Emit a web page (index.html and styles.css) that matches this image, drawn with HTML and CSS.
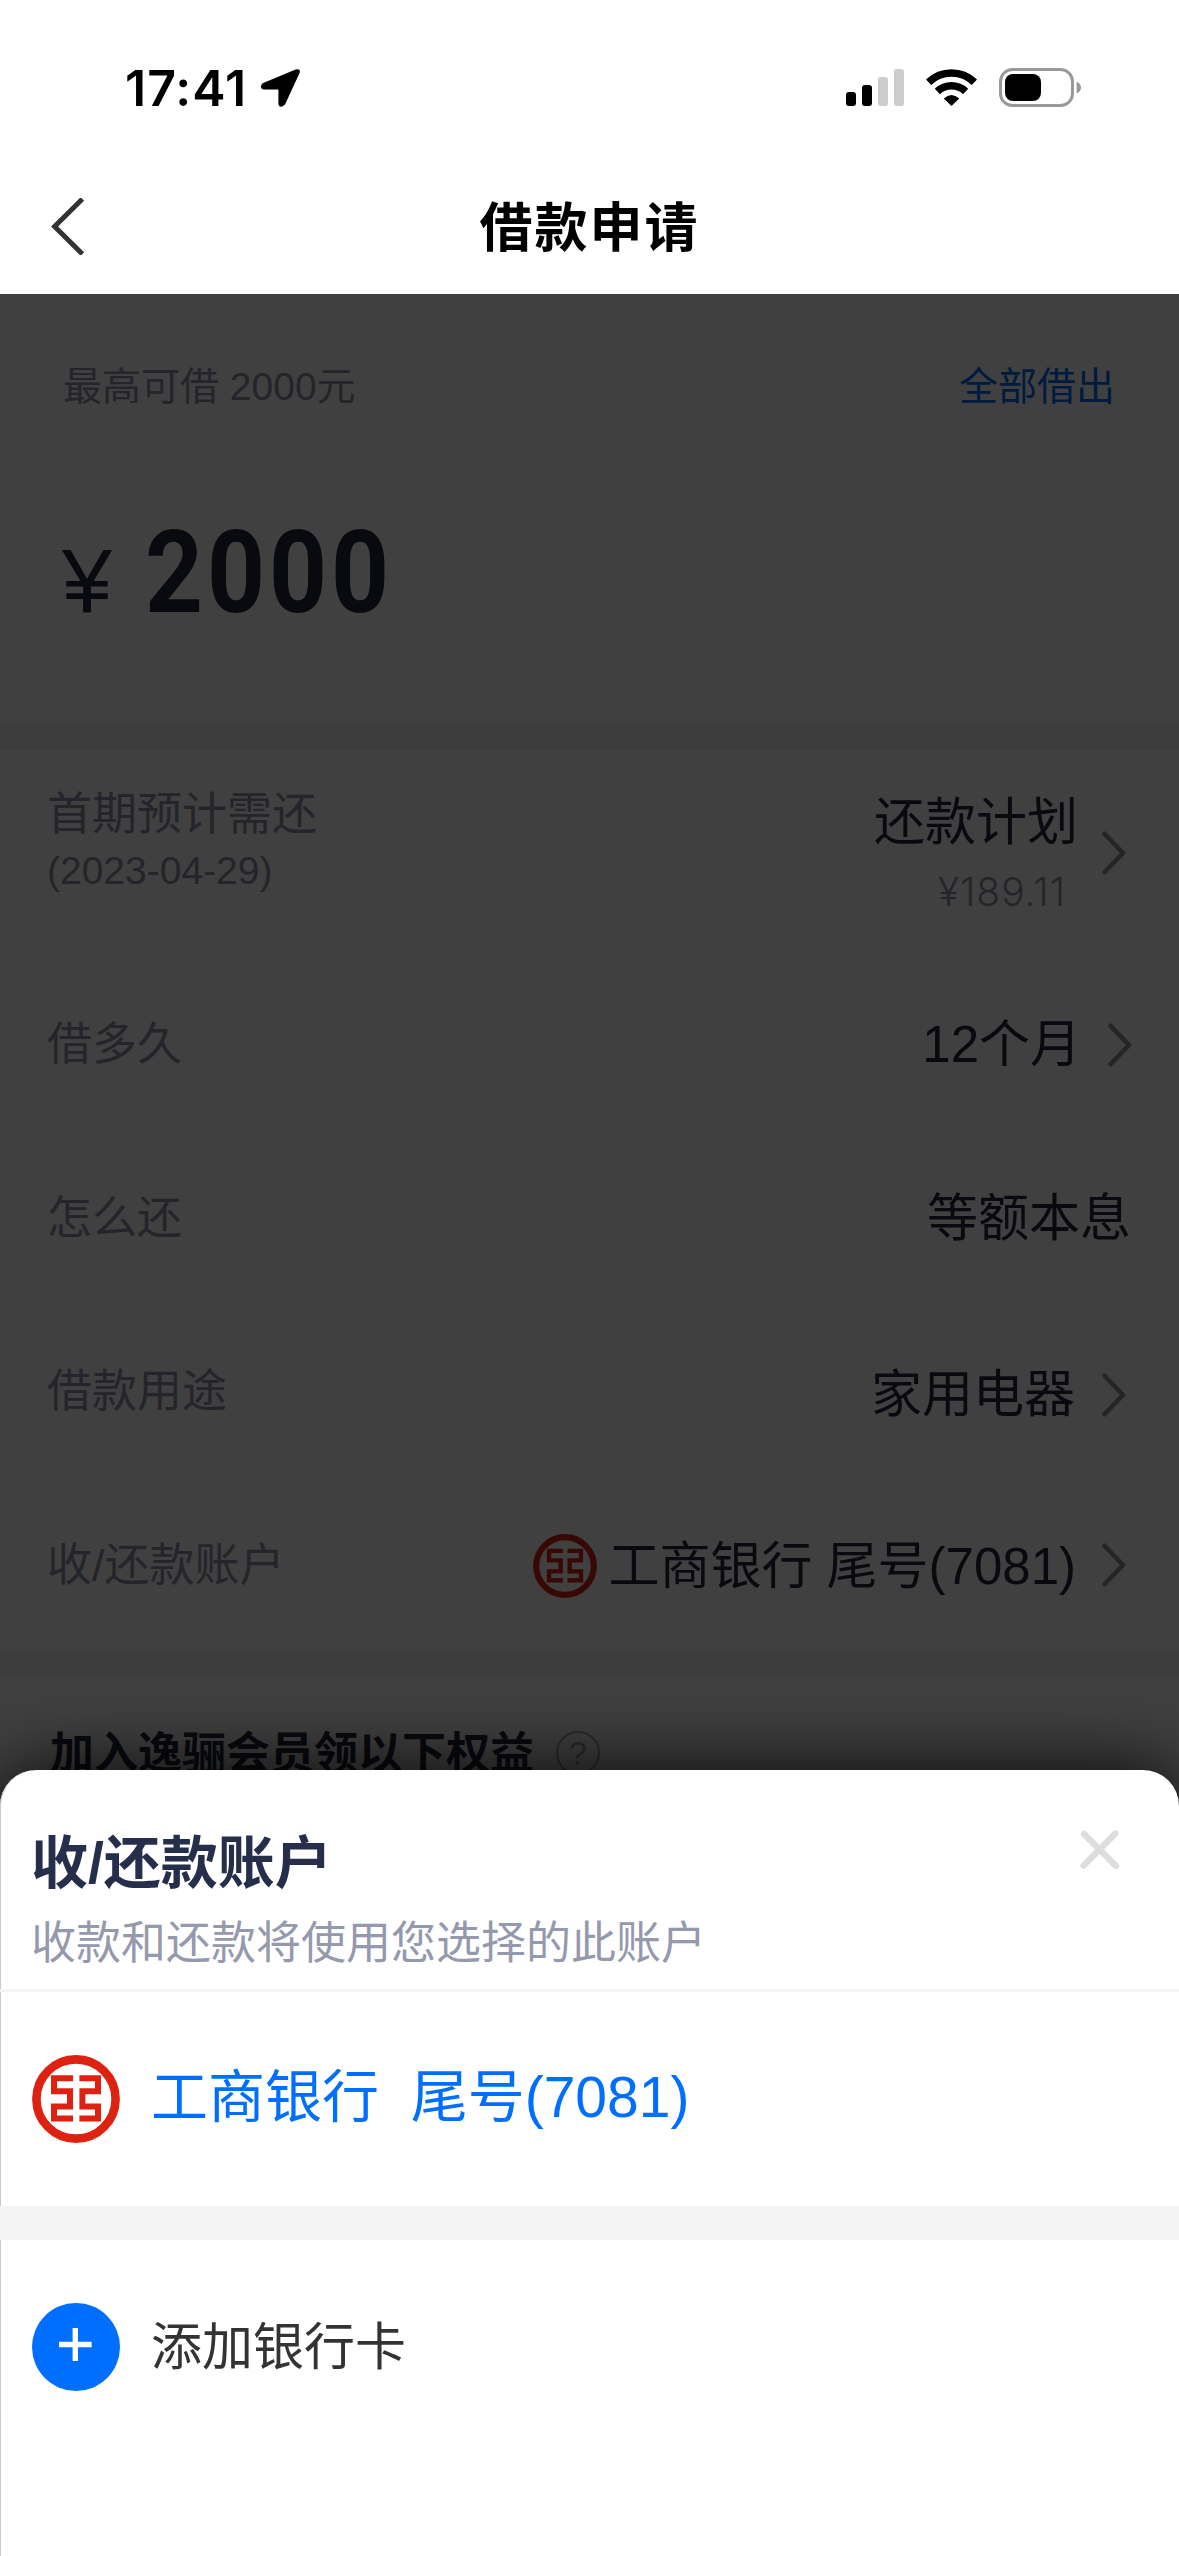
FILE: index.html
```html
<!DOCTYPE html>
<html lang="zh-CN">
    <head>
        <meta charset="UTF-8" />
        <meta name="viewport" content="width=device-width, initial-scale=1.0" />
        <title>借款申请</title>
        <link rel="stylesheet" href="styles.css">
    </head>
    <body>
        <!-- shared shapes -->
        <svg class="defs" width="0" height="0">
            <symbol id="icbc" viewBox="0 0 88 88">
                <circle cx="44" cy="44" r="39.6" fill="none" stroke="#dd2211" stroke-width="8.6" />
                <g fill="none" stroke="#dd2211" stroke-width="6">
                    <path d="M41 23.2H22V36.2H38V51.4H22V63.6H41" />
                    <path d="M47.4 23.2H66V36.2H50.4V51.4H66V63.6H47.4" />
                </g>
            </symbol>
            <symbol id="chevron" viewBox="0 0 24 44">
                <path d="M2.6 2.8L21 22L2.6 41.2" fill="none" stroke="#8e91a3" stroke-width="4.6" stroke-linecap="round" stroke-linejoin="round" />
            </symbol>
        </svg>

        <div class="phone">
            <header class="status-bar">
                <span class="time">17:41</span>
                <svg class="location" width="41" height="40" viewBox="0 0 41 40">
                    <path d="M2.6 15.2L35.6 1.4Q40.6 .2 39.8 4.6L25 36.4Q20 41 18.4 36.4V21.6H3.4Q-1.2 19.6 2.6 15.2Z" />
                </svg>
                <svg class="signal" width="58" height="37" viewBox="0 0 58 37">
                    <rect x="0" y="23" width="10" height="14" rx="3" />
                    <rect x="16" y="16" width="10" height="21" rx="3" />
                    <rect x="32" y="8" width="10" height="29" rx="3" fill="#ccc" />
                    <rect x="48" y="0" width="10" height="37" rx="3" fill="#ccc" />
                </svg>
                <svg class="wifi" width="51" height="37" viewBox="0 0 51 37">
                    <g fill="none" stroke="#000" stroke-width="7.6">
                        <path d="M2.6 13.2A33 33 0 0 1 48.4 13.2" />
                        <path d="M11.4 22.4A20.5 20.5 0 0 1 39.6 22.4" />
                    </g>
                    <path d="M17.8 29.4Q25.5 22.4 33.2 29.4L25.5 37Z" />
                </svg>
                <svg class="battery" width="82" height="39" viewBox="0 0 82 39">
                    <rect x="1.5" y="1.5" width="72" height="36" rx="12" fill="none" stroke="#999" stroke-width="3" />
                    <rect x="6" y="6" width="36" height="27" rx="8" />
                    <path d="M77.6 13.4Q82 15.5 82 19.5T77.6 25.6Z" fill="#999" />
                </svg>
            </header>

            <nav class="nav-bar">
                <svg class="back" width="34" height="57" viewBox="0 0 34 57">
                    <path d="M31.4 1L3.6 28.5L31.4 56" fill="none" stroke="#333" stroke-width="5" />
                </svg>
                <h1>借款申请</h1>
            </nav>

            <main class="content">
                <section class="amount">
                    <div class="amount-head">
                        <span>最高可借 2000元</span>
                        <a class="all">全部借出</a>
                    </div>
                    <div class="amount-value">
                        <span class="yen">¥</span>
                        <span class="number">2000</span>
                    </div>
                </section>

                <ul class="rows">
                    <li class="row first">
                        <div class="label">首期预计需还<small>(2023-04-29)</small></div>
                        <div class="value stacked">还款计划<small>¥189.11</small></div>
                        <svg class="arrow"><use href="#chevron" /></svg>
                    </li>
                    <li class="row term">
                        <div class="label">借多久</div>
                        <div class="value">12个月</div>
                        <svg class="arrow"><use href="#chevron" /></svg>
                    </li>
                    <li class="row plain">
                        <div class="label">怎么还</div>
                        <div class="value">等额本息</div>
                    </li>
                    <li class="row usage">
                        <div class="label">借款用途</div>
                        <div class="value">家用电器</div>
                        <svg class="arrow"><use href="#chevron" /></svg>
                    </li>
                    <li class="row account">
                        <div class="label">收/还款账户</div>
                        <svg class="bank-small"><use href="#icbc" /></svg>
                        <div class="value">工商银行 尾号(7081)</div>
                        <svg class="arrow"><use href="#chevron" /></svg>
                    </li>
                </ul>

                <section class="member">
                    <h2>加入逸骊会员领以下权益</h2>
                    <span class="help">?</span>
                </section>

                <div class="mask"></div>

                <div class="sheet">
                    <div class="sheet-head">
                        <div class="sheet-text">
                            <h3>收/还款账户</h3>
                            <p>收款和还款将使用您选择的此账户</p>
                        </div>
                        <svg class="close" width="40" height="40" viewBox="0 0 40 40">
                            <path d="M4 4L36 36M35.4 3.6L3.6 35.6" fill="none" stroke="#ddd" stroke-width="6.4" stroke-linecap="round" />
                        </svg>
                    </div>
                    <div class="sheet-row card">
                        <svg class="bank"><use href="#icbc" /></svg>
                        <span>工商银行  尾号(7081)</span>
                    </div>
                    <div class="sheet-row add">
                        <svg class="bank" viewBox="0 0 88 88">
                            <circle cx="44" cy="44" r="44" fill="#006eff" />
                            <path d="M27 41.5H59.6M43.3 25V58" stroke="#fff" stroke-width="5.4" />
                        </svg>
                        <span>添加银行卡</span>
                    </div>
                </div>
            </main>
        </div>
    </body>
</html>
```
FILE: styles.css
```css
* {
    box-sizing: border-box;
    margin: 0;
    padding: 0;
}
body {
    font-family: "Liberation Sans", "Noto Sans CJK SC", sans-serif;
    background: #fff;
    color: #25283c;
}
svg {
    display: block;
    flex: none;
}
.defs {
    position: absolute;
}
.phone {
    width: 1179px;
    height: 2556px;
    display: flex;
    flex-direction: column;
    overflow: hidden;
}

/* status bar */
.status-bar {
    height: 160px;
    padding: 68px 98px 0 125px;
    display: flex;
    align-items: flex-start;
}
.time {
    width: 135px;
    font: 600 50px/40px Inter, sans-serif;
    letter-spacing: 1px;
    color: #000;
}
.location {
    margin-right: auto;
}
.signal {
    margin: 1px 22px 0 0;
}
.wifi {
    margin: 1px 22px 0 0;
}

/* nav bar */
.nav-bar {
    height: 134px;
    padding: 0 51px;
    display: flex;
    align-items: center;
}
.back {
    margin-top: -1px;
}
.nav-bar h1 {
    flex: 1;
    margin-right: 34px;
    padding-top: 3px;
    text-align: center;
    font-size: 53px;
    line-height: 80px;
    letter-spacing: 2px;
    color: #000;
}

/* loan form */
.content {
    position: relative;
    flex: 1;
    background: #fff;
}
.amount {
    height: 456px;
    padding: 64px 64px 0 63px;
    border-bottom: 27px solid #f4f4f4;
}
.amount-head {
    display: flex;
    justify-content: space-between;
    font-size: 39px;
    line-height: 58px;
    color: #8f91a6;
}
.all {
    color: #006eff;
}
.amount-value {
    display: flex;
    align-items: baseline;
    margin-top: 92px;
    line-height: 130px;
}
.yen {
    width: 83px;
    font-size: 90px;
    margin-left: -1px;
}
.number {
    font: 700 115px/130px Roboto, sans-serif;
    letter-spacing: 4.5px;
    transform: scaleX(.88);
    transform-origin: left;
}
.rows {
    list-style: none;
    border-bottom: 25px solid #f4f4f4;
}
.row {
    height: 173px;
    margin-left: 48px;
    padding-right: 53px;
    display: flex;
    align-items: center;
    border-bottom: 1px solid #fafafa;
}
.row.first {
    height: 210px;
}
.row.term {
    padding-right: 47px;
}
.row.plain {
    padding-right: 48px;
}
.label {
    margin-left: -1px;
    margin-right: auto;
    font-size: 45px;
    line-height: 60px;
    color: #8f91a6;
}
.label small {
    display: block;
    font-size: 39px;
    line-height: 52px;
}
.first .label {
    margin-top: -27px;
}
.term .label {
    margin-top: -3px;
}
.value {
    font-size: 51px;
    line-height: 70px;
}
.stacked {
    padding-top: 4px;
    text-align: right;
}
.stacked small {
    display: block;
    padding-right: 12px;
    font: 300 39px/68px Inter, sans-serif;
    letter-spacing: 1px;
    color: #8f91a6;
}
.arrow {
    width: 24px;
    height: 44px;
    margin-left: 27px;
}
.first .arrow {
    margin: -3px 0 0 24px;
}
.term .value,
.term .arrow {
    margin-top: -2px;
}
.usage .value,
.usage .arrow {
    margin-top: 5px;
}
.account .value {
    margin-top: 3px;
}
.account .arrow {
    margin-left: 26px;
}
.account .label,
.account .bank-small {
    margin-top: 2px;
}
.bank-small {
    width: 64px;
    height: 64px;
    margin-right: 11px;
}
.member {
    padding: 45px 50px 0;
    display: flex;
    align-items: center;
}
.member h2 {
    font-size: 44px;
    line-height: 64px;
}
.help {
    width: 44px;
    height: 44px;
    margin-left: 22px;
    margin-top: -3px;
    border: 2px solid #aaa;
    border-radius: 50%;
    text-align: center;
    font-size: 32px;
    line-height: 40px;
    color: #aaa;
}
.mask {
    position: absolute;
    inset: 0;
    background: rgba(0, 0, 0, 0.75);
}

/* account picker */
.sheet {
    position: absolute;
    left: 0;
    right: 0;
    bottom: 0;
    height: 786px;
    background: #fff;
    border-radius: 36px 36px 0 0;
    box-shadow: 0 0 75px rgba(0, 0, 0, 0.9), inset 1px 0 #c9c9c9;
}
.sheet-head {
    height: 222px;
    padding: 51px 59px 0 31px;
    display: flex;
    justify-content: space-between;
    border-bottom: 3px solid #f4f4f4;
}
.sheet-head h3 {
    font-size: 57px;
    line-height: 84px;
    color: #252f4b;
}
.sheet-head p {
    font-size: 45px;
    line-height: 77px;
    color: #9599ae;
}
.close {
    margin-top: 9px;
}
.sheet-row {
    height: 214px;
    padding-left: 32px;
    display: flex;
    align-items: center;
    gap: 31px;
    white-space: pre;
}
.bank {
    width: 88px;
    height: 88px;
}
.card {
    font-size: 57px;
    color: #006eff;
}
.card span {
    margin-top: -15px;
}
.add {
    height: 350px;
    padding-bottom: 102px;
    border-top: 34px solid #f4f4f4;
    font-size: 51px;
    color: #333;
}
.add span {
    margin-top: -8px;
}
```
